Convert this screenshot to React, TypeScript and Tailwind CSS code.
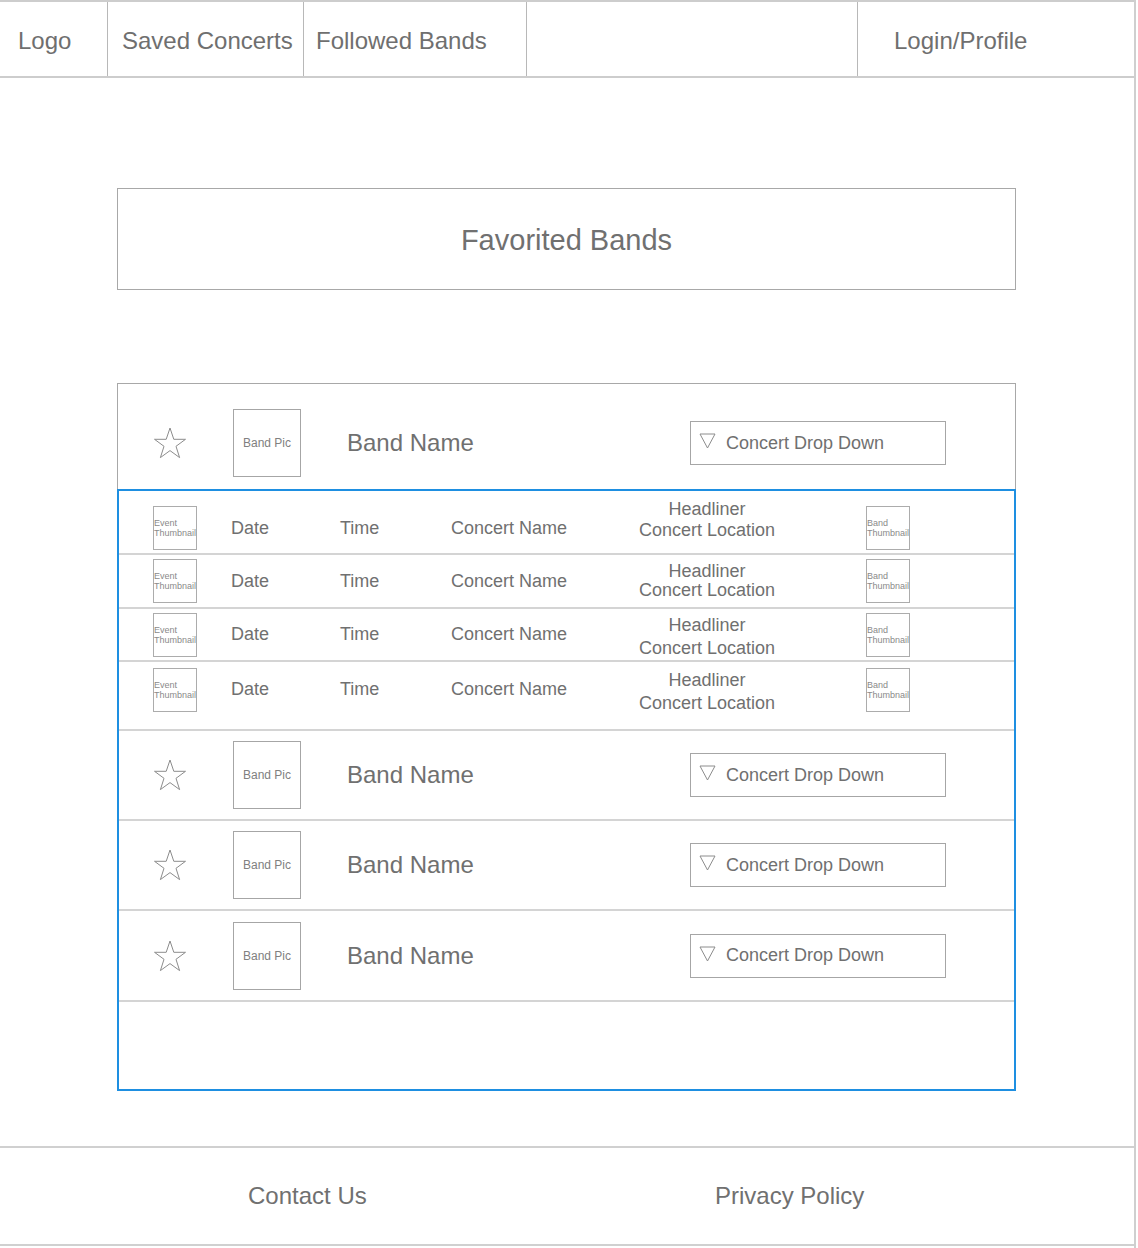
const font = { fontFamily: '"Liberation Sans", Arial, sans-serif' };

function Star() {
  return (
    <svg width="34" height="32" viewBox="0 0 34 32" fill="none">
      <polygon
        points="17,1 20.8,12.3 32.5,12.3 23,19.3 26.6,30.6 17,23.6 7.4,30.6 11,19.3 1.5,12.3 13.2,12.3"
        stroke="#8c8c8c"
        strokeWidth="1"
      />
    </svg>
  );
}

function DropDown() {
  return (
    <div className="w-[256px] h-[44px] border border-[#a6a6a6] flex items-center pl-[8px]">
      <svg width="17" height="16" viewBox="0 0 17 16" fill="none" className="-mt-[4px]">
        <polygon points="1,1 16,1 8.5,15" stroke="#8c8c8c" strokeWidth="1" />
      </svg>
      <span className="ml-[10px] text-[18px] text-[#707070]">Concert Drop Down</span>
    </div>
  );
}

function BandRow({ cls }: { cls: string }) {
  return (
    <div className={`flex items-center shrink-0 ${cls}`}>
      <div className="w-[80px] shrink-0 flex">
        <Star />
      </div>
      <div className="w-[68px] h-[68px] shrink-0 border border-[#a6a6a6] flex items-center justify-center text-[12px] text-[#808080]">
        Band Pic
      </div>
      <div className="w-[389px] shrink-0 pl-[46px] text-[24px] text-[#707070]">Band Name</div>
      <DropDown />
    </div>
  );
}

function Thumb({ label }: { label: string }) {
  return (
    <div className="w-[44px] h-[44px] shrink-0 border border-[#acacac] flex flex-col justify-center text-[9px] leading-[10px] text-[#8a8a8a]">
      <span>{label}</span>
      <span>Thumbnail</span>
    </div>
  );
}

function ConcertRow({ cls, head }: { cls: string; head: string }) {
  return (
    <div className={`flex items-center pl-[34px] shrink-0 border-b-2 border-[#d4d4d4] text-[18px] text-[#707070] ${cls}`}>
      <Thumb label="Event" />
      <div className="w-[143px] shrink-0 pl-[34px]">Date</div>
      <div className="w-[111px] shrink-0">Time</div>
      <div className="w-[180px] shrink-0">Concert Name</div>
      <div className={`w-[152px] shrink-0 text-center ${head}`}>
        <div>Headliner</div>
        <div>Concert Location</div>
      </div>
      <div className="ml-[83px]">
        <Thumb label="Band" />
      </div>
    </div>
  );
}

export default function App() {
  return (
    <div className="w-[1136px] h-[1248px] bg-white border-r-2 border-[#cfcfcf]" style={font}>
      {/* Nav */}
      <header className="flex h-[78px] border-t-2 border-b-2 border-[#cdcdcd] text-[24px] text-[#6f6f6f]">
        <div className="w-[108px] border-r border-[#b8b8b8] flex items-center pt-[4px] pl-[18px]">Logo</div>
        <div className="w-[196px] border-r border-[#b8b8b8] flex items-center pt-[4px] pl-[14px]">Saved Concerts</div>
        <div className="w-[223px] border-r border-[#b8b8b8] flex items-center pt-[4px] pl-[12px]">Followed Bands</div>
        <div className="w-[331px] border-r border-[#b8b8b8]"></div>
        <div className="flex-1 flex items-center pt-[4px] pl-[36px]">Login/Profile</div>
      </header>

      {/* Title */}
      <div className="ml-[117px] mt-[110px] w-[899px] h-[102px] border border-[#a8a8a8] flex items-center justify-center pt-[4px] text-[29px] text-[#707070]">
        Favorited Bands
      </div>

      {/* List */}
      <div className="ml-[117px] mt-[93px] w-[899px]">
        <div className="border-t border-l border-r border-[#a8a8a8]">
          <BandRow cls="h-[105px] pl-[35px] pt-[13px]" />
        </div>
        <div className="h-[602px] border-2 border-[#1e8fe1] flex flex-col">
          <ConcertRow cls="h-[64px] pt-[12px]" head="leading-[21px] -mt-[16px]" />
          <ConcertRow cls="h-[54px]" head="leading-[19px]" />
          <ConcertRow cls="h-[53px]" head="leading-[23px] mt-[5px]" />
          <ConcertRow cls="h-[69px] pb-[12px]" head="leading-[23px] mt-[5px]" />
          <BandRow cls="h-[90px] pl-[34px] border-b-2 border-[#d4d4d4]" />
          <BandRow cls="h-[90px] pl-[34px] border-b-2 border-[#d4d4d4]" />
          <BandRow cls="h-[91px] pl-[34px] border-b-2 border-[#d4d4d4]" />
        </div>
      </div>

      {/* Footer */}
      <footer className="mt-[55px] h-[100px] border-t-2 border-b-2 border-[#d0d0d0] flex items-center pl-[248px] text-[24px] text-[#707070]">
        <div className="w-[467px]">Contact Us</div>
        <div>Privacy Policy</div>
      </footer>
    </div>
  );
}
